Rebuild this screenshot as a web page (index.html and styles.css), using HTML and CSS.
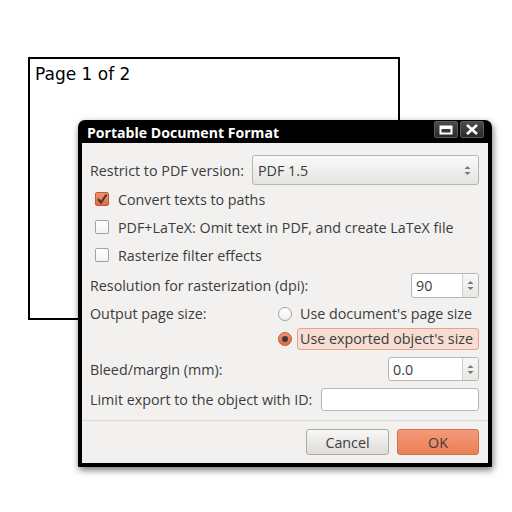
FILE: index.html
```html
<!DOCTYPE html>
<html>
<head>
<meta charset="utf-8">
<link rel="stylesheet" href="styles.css">
</head>
<body>
<div class="page">Page 1 of 2</div>
<div class="dialog">
  <div class="titlebar">
    <span class="title">Portable Document Format</span>
    <div class="wbtns">
      <span class="wbtn"><svg width="14" height="10" viewBox="0 0 14 10"><rect x="1.5" y="1.5" width="11" height="7" fill="none" stroke="#fff" stroke-width="2"/><rect x="1" y="1" width="12" height="3" fill="#fff"/></svg></span>
      <span class="wbtn"><svg width="14" height="11" viewBox="0 0 14 11"><path d="M2 1 L12 10 M12 1 L2 10" stroke="#fff" stroke-width="2.6"/></svg></span>
    </div>
  </div>
  <div class="content">
    <div class="row r-combo">
      <span class="lbl">Restrict to PDF version:</span>
      <div class="combo"><span>PDF 1.5</span><span class="arrows"><svg width="7" height="11" viewBox="0 0 7 11"><path d="M0.5 4 L3.5 1 L6.5 4Z M0.5 7 L3.5 10 L6.5 7Z" fill="#777"/></svg></span></div>
    </div>
    <div class="row r-check">
      <span class="cb checked"><svg width="14" height="14" viewBox="0 0 14 14"><path d="M3 7 L6 10.5 L11.5 2.5" fill="none" stroke="#3a3a3a" stroke-width="2"/></svg></span>
      <span class="lbl">Convert texts to paths</span>
    </div>
    <div class="row r-check">
      <span class="cb"></span>
      <span class="lbl">PDF+LaTeX: Omit text in PDF, and create LaTeX file</span>
    </div>
    <div class="row r-check">
      <span class="cb"></span>
      <span class="lbl">Rasterize filter effects</span>
    </div>
    <div class="row r-spin">
      <span class="lbl">Resolution for rasterization (dpi):</span>
      <div class="spin w-dpi"><span class="val">90</span><span class="spinbtn"><svg width="7" height="11" viewBox="0 0 7 11"><path d="M0.5 4 L3.5 1 L6.5 4Z M0.5 7 L3.5 10 L6.5 7Z" fill="#777"/></svg></span></div>
    </div>
    <div class="row r-radio">
      <span class="lbl lbl-out">Output page size:</span>
      <div class="radios">
        <div class="radio-row"><span class="rb"></span><span class="rlbl">Use document's page size</span></div>
        <div class="radio-row"><span class="rb on"><span class="dot"></span></span><span class="rlbl hl">Use exported object's size</span></div>
      </div>
    </div>
    <div class="row r-spin2">
      <span class="lbl">Bleed/margin (mm):</span>
      <div class="spin w-bleed"><span class="val">0.0</span><span class="spinbtn"><svg width="7" height="11" viewBox="0 0 7 11"><path d="M0.5 4 L3.5 1 L6.5 4Z M0.5 7 L3.5 10 L6.5 7Z" fill="#777"/></svg></span></div>
    </div>
    <div class="row r-entry">
      <span class="lbl">Limit export to the object with ID:</span>
      <div class="entry"></div>
    </div>
    <div class="sep"></div>
    <div class="buttons">
      <span class="btn cancel">Cancel</span>
      <span class="btn ok">OK</span>
    </div>
  </div>
</div>
</body>
</html>
```
FILE: styles.css
```css
html, body { margin: 0; padding: 0; background: #fff; }
body { width: 512px; height: 512px; position: relative; overflow: hidden; }

.page {
  position: absolute;
  left: 28px; top: 57px;
  width: 372px; height: 263px;
  box-sizing: border-box;
  border: 2px solid #000;
  font-family: "DejaVu Sans", sans-serif;
  font-size: 17px;
  line-height: 20px;
  padding: 5px 0 0 5px;
  color: #000;
}

.dialog {
  position: absolute;
  left: 78px; top: 120px;
  width: 414px; height: 347px;
  box-sizing: border-box;
  background: #000;
  border-radius: 7px 7px 1px 1px;
  padding: 0 4px 4px 4px;
  display: flex;
  flex-direction: column;
  box-shadow: 1px 3px 7px rgba(0,0,0,0.55);
}
.titlebar {
  height: 23px;
  display: flex;
  align-items: center;
  justify-content: space-between;
  padding-left: 5px;
}
.title {
  font-family: "Open Sans", sans-serif;
  font-weight: bold;
  font-size: 14.1px;
  color: #fff;
  margin-top: 1px;
}
.wbtns { display: flex; gap: 2px; align-self: flex-start; margin-top: 1px; margin-right: 4px; }
.wbtn {
  width: 22px; height: 15px;
  background: linear-gradient(#4a4a4a, #2a2a2a);
  border: 1px solid #5a5a5a;
  border-radius: 2px;
  display: flex; align-items: center; justify-content: center;
}

.content {
  flex: 1;
  background: #f2f1f0;
  padding: 12px 9px 0 8px;
  font-family: "Open Sans", sans-serif;
  font-size: 14.3px;
  color: #3c3c3c;
  display: flex;
  flex-direction: column;
}
.row { display: flex; align-items: center; justify-content: space-between; }
.r-combo { height: 30px; }
.r-check { height: 28px; justify-content: flex-start; }
.r-spin { height: 28px; margin-top: 2px; }
.r-radio { height: 52px; margin-top: 2px; align-items: flex-start; }
.r-spin2 { height: 28px; margin-top: 2px; }
.r-entry { height: 28px; margin-top: 2px; }

.combo {
  width: 227px; height: 30px;
  box-sizing: border-box;
  border: 1px solid #b8b6b2;
  border-radius: 3px;
  background: linear-gradient(#fafafa, #e4e3e1);
  display: flex; align-items: center; justify-content: space-between;
  padding: 0 7px 0 5px;
  color: #3c3c3c;
}
.arrows { display: flex; }

.cb {
  width: 14px; height: 14px;
  box-sizing: border-box;
  border: 1px solid #a3a19d;
  border-radius: 2px;
  background: linear-gradient(#fff, #f2f2f2);
  margin: 0 9px 0 5px;
  display: flex;
}
.cb.checked {
  background: linear-gradient(#f19470, #e06a40);
  border-color: #c7592f;
}
.cb svg { margin: -1px; }

.spin {
  height: 25px;
  box-sizing: border-box;
  border: 1px solid #b8b6b2;
  border-radius: 3px;
  background: #fff;
  display: flex;
  align-items: stretch;
}
.w-dpi { width: 68px; }
.w-bleed { width: 91px; height: 24px; }
.spin .val { flex: 1; padding-left: 4px; display: flex; align-items: center; color: #3c3c3c; }
.spinbtn {
  width: 15px;
  border-left: 1px solid #d0cecb;
  background: linear-gradient(#f8f8f8, #e8e7e5);
  border-radius: 0 2px 2px 0;
  display: flex; align-items: center; justify-content: center;
}

.lbl-out { margin-top: 3px; }
.radios { display: flex; flex-direction: column; width: 201px; }
.radio-row { display: flex; align-items: center; height: 26px; }
.radio-row + .radio-row { height: 24px; }
.rb {
  width: 14px; height: 14px;
  box-sizing: border-box;
  border: 1px solid #a3a19d;
  border-radius: 50%;
  background: linear-gradient(#fff, #f0f0f0);
  margin-right: 5px;
  display: flex; align-items: center; justify-content: center;
}
.rb.on { background: linear-gradient(#f19470, #e06a40); border-color: #c7592f; }
.dot { width: 6px; height: 6px; border-radius: 50%; background: #3a3a3a; }
.rlbl { padding: 0 2px; border: 1px solid transparent; line-height: 20px; }
.rlbl.hl {
  background: #f6ddd3;
  border-color: #e8a48a;
  border-radius: 3px;
  flex: 1;
}

.entry {
  width: 158px; height: 23px;
  box-sizing: border-box;
  border: 1px solid #b8b6b2;
  border-radius: 3px;
  background: #fff;
}

.sep { height: 1px; background: #dad8d5; margin: 7px -9px 0 -8px; }
.buttons { display: flex; justify-content: flex-end; gap: 8px; margin-top: 8px; }
.btn {
  width: 83px; height: 26px;
  box-sizing: border-box;
  border-radius: 3px;
  display: flex; align-items: center; justify-content: center;
}
.cancel { background: linear-gradient(#f7f7f6, #dedcd9); border: 1px solid #aeaba6; color: #3c3c3c; }
.ok { width: 82px; background: linear-gradient(#f49a78, #ec7f57); border: 1px solid #d0724f; color: #3c3c3c; }
```
